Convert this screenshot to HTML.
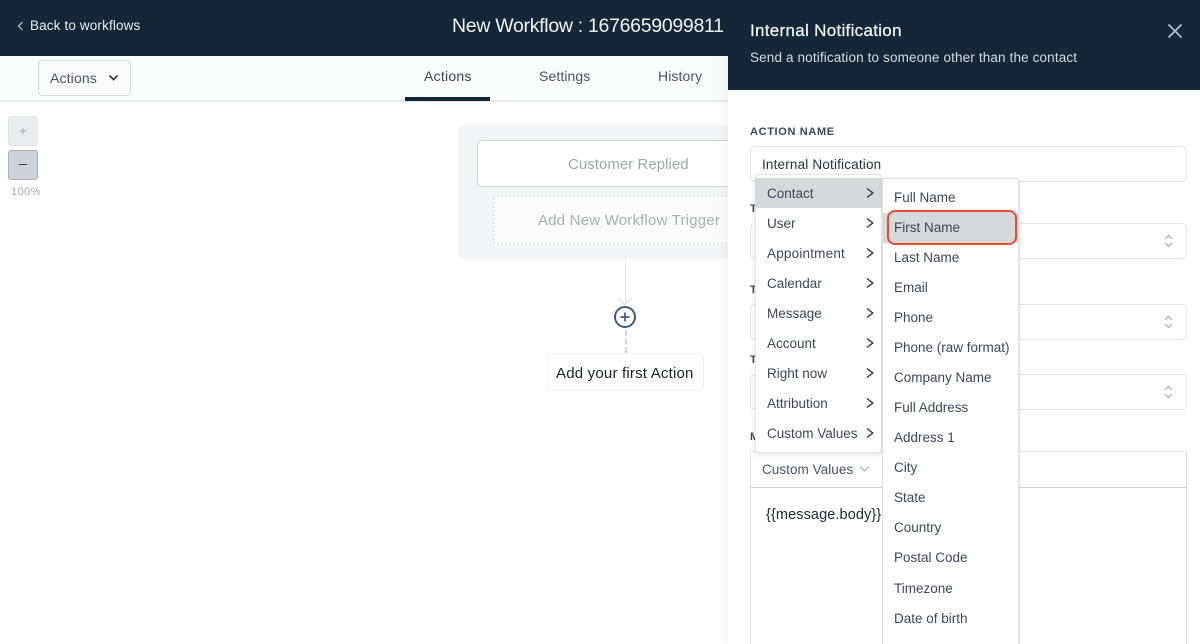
<!DOCTYPE html>
<html><head><meta charset="utf-8"><style>
html,body{margin:0;padding:0;width:1200px;height:644px;overflow:hidden;background:#fff}
body{position:relative;font-family:"Liberation Sans",sans-serif;color:#374151}
div,span,svg{position:absolute;box-sizing:border-box}
.t{white-space:nowrap;line-height:20px;height:20px}
.m{font-size:13.5px;color:#3f4652;letter-spacing:0}
.box{left:750px;width:437px;height:36px;border:1px solid #e3e5e8;border-radius:5px;background:#fff}
</style></head><body>
<div style="left:0;top:0;width:1200px;height:56px;background:#152736"></div>
<div style="left:0;top:56px;width:728px;height:46px;background:#fafbfb;border-bottom:2px solid #e8e9eb"></div>
<svg style="left:16px;top:19px" width="10" height="14" viewBox="0 0 10 14"><path d="M6.500 3 L2.500 7 L6.500 11" fill="none" stroke="#c9d0d6" stroke-width="1.100"/></svg>
<div class="t" style="left:30px;top:16px;font-size:13.500px;color:#e8edf0;letter-spacing:.14px">Back to workflows</div>
<div class="t" style="left:452px;top:16px;font-size:19.500px;color:#eef2f4;letter-spacing:-.3px">New Workflow : 1676659099811</div>

<div style="left:38px;top:60px;width:93px;height:36px;border:1px solid #d8dadd;border-radius:4px;background:#fbfbfc"></div>
<div class="t" style="left:50px;top:68px;font-size:14px;color:#4b5360;letter-spacing:.15px">Actions</div>
<svg style="left:107px;top:73px" width="13" height="10" viewBox="0 0 13 10"><path d="M2.500 2.500 L6.500 6.500 L10.500 2.500" fill="none" stroke="#3a414c" stroke-width="1.800"/></svg>

<div class="t" style="left:424px;top:66px;font-size:14px;color:#3f4652;letter-spacing:.25px">Actions</div>
<div class="t" style="left:539px;top:66px;font-size:14px;color:#4b5360;letter-spacing:.1px">Settings</div>
<div class="t" style="left:658px;top:66px;font-size:14px;color:#4b5360;letter-spacing:.1px">History</div>
<div style="left:405px;top:97px;width:85px;height:4px;background:#152736"></div>

<div style="left:8px;top:116px;width:30px;height:30px;background:#ebecee;border:1px solid #e2e3e6;border-radius:3px"></div>
<svg style="left:18px;top:126px" width="10" height="10" viewBox="0 0 10 10"><path d="M5 2V8M2 5H8" stroke="#a5a9af" stroke-width="1"/></svg>
<div style="left:8px;top:150px;width:30px;height:30px;background:#ced1d7;border:1px solid #a9adb4;border-radius:3px"></div>
<div style="left:19px;top:164px;width:8px;height:1px;background:#3d434c"></div>
<div class="t" style="left:11px;top:182px;font-size:11px;color:#a3a6ab;letter-spacing:.45px">100%</div>

<div style="left:458px;top:125px;width:280px;height:134px;background:#f3f4f5;border-radius:6px"></div>
<div style="left:477px;top:140px;width:270px;height:47px;background:#fff;border:1px solid #d0d3d7;border-radius:5px"></div>
<div class="t" style="left:568px;top:155px;font-size:15px;color:#a0a4aa;letter-spacing:.04px">Customer Replied</div>
<div style="left:493px;top:195px;width:250px;height:49px;background:#fbfbfc;border:2px dotted #e6e8ea;border-right:0"></div>
<div class="t" style="left:538px;top:211px;font-size:15px;color:#a9adb2;letter-spacing:.2px">Add New Workflow Trigger</div>

<div style="left:624.500px;top:259px;width:1.500px;height:46px;background:#e0e2e5"></div>
<svg style="left:616px;top:296px" width="18" height="12" viewBox="0 0 18 12"><path d="M2 2 L9 9 L16 2" fill="none" stroke="#dcdee1" stroke-width="1"/></svg>
<svg style="left:613px;top:305px" width="24" height="24" viewBox="0 0 24 24"><circle cx="12" cy="12" r="10" fill="#fff" stroke="#3f5a80" stroke-width="2"/><path d="M12 7.500V16.500M7.500 12H16.500" stroke="#3f5a80" stroke-width="1.700"/></svg>
<div style="left:625px;top:330px;width:0;height:23px;border-left:2px dashed #d3d5d9"></div>
<div style="left:547px;top:353px;width:157px;height:38px;background:#fff;border:1px solid #f1f2f3;border-radius:4px"></div>
<div class="t" style="left:556px;top:364px;font-size:15px;color:#1c2026;letter-spacing:.2px">Add your first Action</div>

<div style="left:728px;top:0;width:472px;height:644px;background:#fff;box-shadow:-4px 0 8px rgba(0,0,0,.04)"></div>
<div style="left:728px;top:0;width:472px;height:90px;background:#152736"></div>
<div class="t" style="left:750px;top:21px;font-size:17px;color:#f2f5f7;letter-spacing:.3px;-webkit-text-stroke:.25px #f2f5f7">Internal Notification</div>
<div class="t" style="left:750px;top:48px;font-size:13.500px;color:#d5dbe0;letter-spacing:.14px">Send a notification to someone other than the contact</div>
<svg style="left:1167px;top:23px" width="16" height="16" viewBox="0 0 16 16"><path d="M1.500 1.500 L14.500 14.500 M14.500 1.500 L1.500 14.500" stroke="#a9c0dc" stroke-width="1.800"/></svg>

<div class="t" style="left:750px;top:122px;font-size:11px;font-weight:700;color:#404650;letter-spacing:.65px">ACTION NAME</div>
<div class="box" style="top:146px"></div>
<div class="t" style="left:762px;top:155px;font-size:13.500px;color:#2b3038;letter-spacing:.18px">Internal Notification</div>

<div class="box" style="top:223px"></div>
<div class="box" style="top:304px"></div>
<div class="box" style="top:374px"></div>
<svg style="left:1163px;top:233px" width="11" height="16" viewBox="0 0 11 16"><path d="M2 6 L5.500 2.500 L9 6 M2 10 L5.500 13.500 L9 10" fill="none" stroke="#a5a9af" stroke-width="1.200"/></svg>
<svg style="left:1163px;top:314px" width="11" height="16" viewBox="0 0 11 16"><path d="M2 6 L5.500 2.500 L9 6 M2 10 L5.500 13.500 L9 10" fill="none" stroke="#a5a9af" stroke-width="1.200"/></svg>
<svg style="left:1163px;top:384px" width="11" height="16" viewBox="0 0 11 16"><path d="M2 6 L5.500 2.500 L9 6 M2 10 L5.500 13.500 L9 10" fill="none" stroke="#a5a9af" stroke-width="1.200"/></svg>
<div class="t" style="left:750px;top:199px;font-size:11px;font-weight:700;color:#404650">T</div>
<div class="t" style="left:750px;top:280px;font-size:11px;font-weight:700;color:#404650">T</div>
<div class="t" style="left:750px;top:350px;font-size:11px;font-weight:700;color:#404650">T</div>
<div class="t" style="left:750px;top:427px;font-size:11px;font-weight:700;color:#404650">M</div>

<div style="left:750px;top:451px;width:437px;height:200px;border:1px solid #dfe1e4;background:#fff"></div>
<div style="left:750px;top:487px;width:437px;height:1px;background:#d0d2d6"></div>
<div class="t" style="left:762px;top:460px;font-size:13.500px;color:#4b5360;letter-spacing:.05px">Custom Values</div>
<svg style="left:858px;top:464px" width="13" height="10" viewBox="0 0 13 10"><path d="M2 2.500 L6.500 7 L11 2.500" fill="none" stroke="#a5a9af" stroke-width="1"/></svg>
<div class="t" style="left:766px;top:505px;font-size:14.500px;color:#23272e;letter-spacing:.1px">{{message.body}}</div>

<div style="left:755px;top:174px;width:127px;height:279px;background:#fff;border:1px solid #e4e5e7;border-radius:4px;box-shadow:0 2px 6px rgba(0,0,0,.1)"></div>
<div style="left:755px;top:178px;width:127px;height:30px;background:#d6d8da"></div>
<div class="t m" style="left:767px;top:184px">Contact</div>
<div class="t m" style="left:767px;top:214px">User</div>
<div class="t m" style="left:767px;top:244px;letter-spacing:.2px">Appointment</div>
<div class="t m" style="left:767px;top:274px">Calendar</div>
<div class="t m" style="left:767px;top:304px">Message</div>
<div class="t m" style="left:767px;top:334px">Account</div>
<div class="t m" style="left:767px;top:364px">Right now</div>
<div class="t m" style="left:767px;top:394px">Attribution</div>
<div class="t m" style="left:767px;top:424px">Custom Values</div>
<svg style="left:864px;top:178px" width="12" height="270" viewBox="0 0 12 270"><g fill="none" stroke="#2f353e" stroke-width="1.400"><path d="M3 10.500 L8.800 15 L3 19.500"/><path d="M3 40.500 L8.800 45 L3 49.500"/><path d="M3 70.500 L8.800 75 L3 79.500"/><path d="M3 100.500 L8.800 105 L3 109.500"/><path d="M3 130.500 L8.800 135 L3 139.500"/><path d="M3 160.500 L8.800 165 L3 169.500"/><path d="M3 190.500 L8.800 195 L3 199.500"/><path d="M3 220.500 L8.800 225 L3 229.500"/><path d="M3 250.500 L8.800 255 L3 259.500"/></g></svg>

<div style="left:882px;top:178px;width:137px;height:480px;background:#fff;border:1px solid #dcdee0;border-radius:2px;box-shadow:1px 1px 4px rgba(0,0,0,.1)"></div>
<div style="left:883px;top:213px;width:135px;height:30px;background:#d6d8dc"></div>
<div style="left:887px;top:210px;width:130px;height:35px;border:2.500px solid #e2502f;border-radius:8px;background:#d6d8dc"></div>
<div class="t m" style="left:894px;top:188px">Full Name</div>
<div class="t m" style="left:894px;top:218px">First Name</div>
<div class="t m" style="left:894px;top:248px">Last Name</div>
<div class="t m" style="left:894px;top:278px">Email</div>
<div class="t m" style="left:894px;top:308px">Phone</div>
<div class="t m" style="left:894px;top:338px">Phone (raw format)</div>
<div class="t m" style="left:894px;top:368px">Company Name</div>
<div class="t m" style="left:894px;top:398px">Full Address</div>
<div class="t m" style="left:894px;top:428px">Address 1</div>
<div class="t m" style="left:894px;top:458px">City</div>
<div class="t m" style="left:894px;top:488px">State</div>
<div class="t m" style="left:894px;top:518px">Country</div>
<div class="t m" style="left:894px;top:548px">Postal Code</div>
<div class="t m" style="left:894px;top:579px">Timezone</div>
<div class="t m" style="left:894px;top:609px">Date of birth</div>
</body></html>
